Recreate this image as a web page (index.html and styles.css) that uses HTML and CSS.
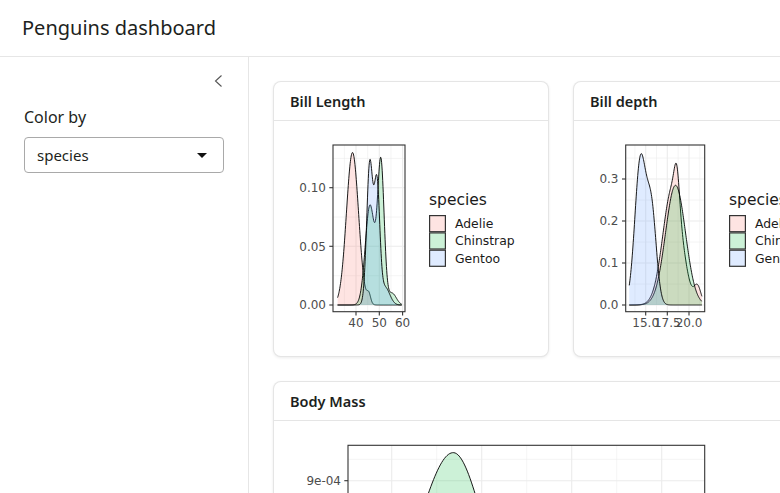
FILE: index.html
```html
<!DOCTYPE html>
<html lang="en">
<head>
<meta charset="utf-8">
<title>Penguins dashboard</title>
<link rel="stylesheet" href="styles.css">
</head>
<body>
<header class="topbar">
  <h1 class="title">Penguins dashboard</h1>
</header>
<div class="layout">
  <aside class="sidebar">
    <div class="collapse-row">
      <svg class="chevron" width="10" height="12" viewBox="0 0 10 12"><path d="M7.5 0.5 L1.5 6 L7.5 11.5"/></svg>
    </div>
    <label class="field-label">Color by</label>
    <div class="select">
      <span>species</span>
      <span class="caret"></span>
    </div>
  </aside>
  <main class="main">
    <div class="cards">
      <section class="card">
        <div class="card-header">Bill Length</div>
        <div class="card-body">
          <svg class="plot" width="244" height="203" viewBox="0 0 244 203">
            <rect class="panel-bg" x="43" y="8" width="72" height="166.7"/>
            <g class="grid-minor">
              <line x1="54.35" y1="8" x2="54.35" y2="174.7"/>
              <line x1="77.65" y1="8" x2="77.65" y2="174.7"/>
              <line x1="100.95" y1="8" x2="100.95" y2="174.7"/>
              <line x1="43" y1="21.4" x2="115" y2="21.4"/>
              <line x1="43" y1="80" x2="115" y2="80"/>
              <line x1="43" y1="138.7" x2="115" y2="138.7"/>
            </g>
            <g class="grid-major">
              <line x1="66" y1="8" x2="66" y2="174.7"/>
              <line x1="89.3" y1="8" x2="89.3" y2="174.7"/>
              <line x1="112.6" y1="8" x2="112.6" y2="174.7"/>
              <line x1="43" y1="50.7" x2="115" y2="50.7"/>
              <line x1="43" y1="109.3" x2="115" y2="109.3"/>
              <line x1="43" y1="168" x2="115" y2="168"/>
            </g>
            <path id="bl-adelie-fill" class="area adelie"/>
            <path id="bl-adelie-line" class="curve"/>
            <path id="bl-chinstrap-fill" class="area chinstrap"/>
            <path id="bl-chinstrap-line" class="curve"/>
            <path id="bl-gentoo-fill" class="area gentoo"/>
            <path id="bl-gentoo-line" class="curve"/>
            <rect class="panel-border" x="43" y="8" width="72" height="166.7"/>
            <g class="ticks">
              <line x1="39.3" y1="50.7" x2="43" y2="50.7"/>
              <line x1="39.3" y1="109.3" x2="43" y2="109.3"/>
              <line x1="39.3" y1="168" x2="43" y2="168"/>
              <line x1="66" y1="174.7" x2="66" y2="178.4"/>
              <line x1="89.3" y1="174.7" x2="89.3" y2="178.4"/>
              <line x1="112.6" y1="174.7" x2="112.6" y2="178.4"/>
            </g>
            <g class="axis-text y-text">
              <text x="36" y="55">0.10</text>
              <text x="36" y="113.6">0.05</text>
              <text x="36" y="172.3">0.00</text>
            </g>
            <g class="axis-text x-text">
              <text x="66" y="190">40</text>
              <text x="89.3" y="190">50</text>
              <text x="112.6" y="190">60</text>
            </g>
            <text class="legend-title" x="139" y="68">species</text>
            <rect class="key adelie" x="139.6" y="78.6" width="15.8" height="16.1"/>
            <rect class="key chinstrap" x="139.6" y="95.9" width="15.8" height="16.1"/>
            <rect class="key gentoo" x="139.6" y="113.2" width="15.8" height="16.1"/>
            <text class="legend-text" x="165" y="91">Adelie</text>
            <text class="legend-text" x="165" y="108.4">Chinstrap</text>
            <text class="legend-text" x="165" y="125.7">Gentoo</text>
          </svg>
        </div>
      </section>

      <section class="card">
        <div class="card-header">Bill depth</div>
        <div class="card-body">
          <svg class="plot" width="244" height="203" viewBox="0 0 244 203">
            <rect class="panel-bg" x="35.7" y="8" width="79" height="166.7"/>
            <g class="grid-minor">
              <line x1="44.9" y1="8" x2="44.9" y2="174.7"/>
              <line x1="66.5" y1="8" x2="66.5" y2="174.7"/>
              <line x1="88.1" y1="8" x2="88.1" y2="174.7"/>
              <line x1="109.8" y1="8" x2="109.8" y2="174.7"/>
              <line x1="35.7" y1="21" x2="114.7" y2="21"/>
              <line x1="35.7" y1="63" x2="114.7" y2="63"/>
              <line x1="35.7" y1="105" x2="114.7" y2="105"/>
              <line x1="35.7" y1="147" x2="114.7" y2="147"/>
            </g>
            <g class="grid-major">
              <line x1="55.7" y1="8" x2="55.7" y2="174.7"/>
              <line x1="77.3" y1="8" x2="77.3" y2="174.7"/>
              <line x1="99" y1="8" x2="99" y2="174.7"/>
              <line x1="35.7" y1="42" x2="114.7" y2="42"/>
              <line x1="35.7" y1="84" x2="114.7" y2="84"/>
              <line x1="35.7" y1="126" x2="114.7" y2="126"/>
              <line x1="35.7" y1="168" x2="114.7" y2="168"/>
            </g>
            <path id="bd-adelie-fill" class="area adelie"/>
            <path id="bd-adelie-line" class="curve"/>
            <path id="bd-chinstrap-fill" class="area chinstrap"/>
            <path id="bd-chinstrap-line" class="curve"/>
            <path id="bd-gentoo-fill" class="area gentoo"/>
            <path id="bd-gentoo-line" class="curve"/>
            <rect class="panel-border" x="35.7" y="8" width="79" height="166.7"/>
            <g class="ticks">
              <line x1="32" y1="42" x2="35.7" y2="42"/>
              <line x1="32" y1="84" x2="35.7" y2="84"/>
              <line x1="32" y1="126" x2="35.7" y2="126"/>
              <line x1="32" y1="168" x2="35.7" y2="168"/>
              <line x1="55.7" y1="174.7" x2="55.7" y2="178.4"/>
              <line x1="77.3" y1="174.7" x2="77.3" y2="178.4"/>
              <line x1="99" y1="174.7" x2="99" y2="178.4"/>
            </g>
            <g class="axis-text y-text">
              <text x="28.5" y="46.3">0.3</text>
              <text x="28.5" y="88.3">0.2</text>
              <text x="28.5" y="130.3">0.1</text>
              <text x="28.5" y="172.3">0.0</text>
            </g>
            <g class="axis-text x-text">
              <text x="55.7" y="190">15.0</text>
              <text x="77.3" y="190">17.5</text>
              <text x="99" y="190">20.0</text>
            </g>
            <text class="legend-title" x="139" y="68">species</text>
            <rect class="key adelie" x="139.6" y="78.6" width="15.8" height="16.1"/>
            <rect class="key chinstrap" x="139.6" y="95.9" width="15.8" height="16.1"/>
            <rect class="key gentoo" x="139.6" y="113.2" width="15.8" height="16.1"/>
            <text class="legend-text" x="165" y="91">Adelie</text>
            <text class="legend-text" x="165" y="108.4">Chinstrap</text>
            <text class="legend-text" x="165" y="125.7">Gentoo</text>
          </svg>
        </div>
      </section>

      <section class="card card-wide">
        <div class="card-header">Body Mass</div>
        <div class="card-body">
          <svg class="plot" width="542" height="203" viewBox="0 0 542 203">
            <rect class="panel-bg" x="58" y="8.3" width="356.7" height="171.7"/>
            <g class="grid-minor">
              <line x1="146.7" y1="8.3" x2="146.7" y2="180"/>
              <line x1="236.7" y1="8.3" x2="236.7" y2="180"/>
              <line x1="326.7" y1="8.3" x2="326.7" y2="180"/>
              <line x1="58" y1="22.3" x2="414.7" y2="22.3"/>
              <line x1="58" y1="65" x2="414.7" y2="65"/>
              <line x1="58" y1="107.8" x2="414.7" y2="107.8"/>
              <line x1="58" y1="150.6" x2="414.7" y2="150.6"/>
            </g>
            <g class="grid-major">
              <line x1="101.7" y1="8.3" x2="101.7" y2="180"/>
              <line x1="191.7" y1="8.3" x2="191.7" y2="180"/>
              <line x1="281.7" y1="8.3" x2="281.7" y2="180"/>
              <line x1="371.7" y1="8.3" x2="371.7" y2="180"/>
              <line x1="58" y1="43.7" x2="414.7" y2="43.7"/>
              <line x1="58" y1="86.4" x2="414.7" y2="86.4"/>
              <line x1="58" y1="129.2" x2="414.7" y2="129.2"/>
              <line x1="58" y1="172" x2="414.7" y2="172"/>
            </g>
            <path id="bm-adelie-fill" class="area adelie"/>
            <path id="bm-adelie-line" class="curve"/>
            <path id="bm-chinstrap-fill" class="area chinstrap"/>
            <path id="bm-chinstrap-line" class="curve"/>
            <path id="bm-gentoo-fill" class="area gentoo"/>
            <path id="bm-gentoo-line" class="curve"/>
            <rect class="panel-border" x="58" y="8.3" width="356.7" height="171.7"/>
            <g class="ticks">
              <line x1="54.3" y1="43.7" x2="58" y2="43.7"/>
              <line x1="54.3" y1="86.4" x2="58" y2="86.4"/>
              <line x1="54.3" y1="129.2" x2="58" y2="129.2"/>
              <line x1="54.3" y1="172" x2="58" y2="172"/>
              <line x1="101.7" y1="180" x2="101.7" y2="183.7"/>
              <line x1="191.7" y1="180" x2="191.7" y2="183.7"/>
              <line x1="281.7" y1="180" x2="281.7" y2="183.7"/>
              <line x1="371.7" y1="180" x2="371.7" y2="183.7"/>
            </g>
            <g class="axis-text y-text">
              <text x="51" y="48">9e-04</text>
              <text x="51" y="90.7">6e-04</text>
              <text x="51" y="133.5">3e-04</text>
              <text x="51" y="176.3">0e+00</text>
            </g>
            <g class="axis-text x-text">
              <text x="101.7" y="196">3000</text>
              <text x="191.7" y="196">4000</text>
              <text x="281.7" y="196">5000</text>
              <text x="371.7" y="196">6000</text>
            </g>
            <text class="legend-title" x="430" y="72">species</text>
            <rect class="key adelie" x="430.6" y="82.6" width="15.8" height="16.1"/>
            <rect class="key chinstrap" x="430.6" y="99.9" width="15.8" height="16.1"/>
            <rect class="key gentoo" x="430.6" y="117.2" width="15.8" height="16.1"/>
            <text class="legend-text" x="456" y="95">Adelie</text>
            <text class="legend-text" x="456" y="112.4">Chinstrap</text>
            <text class="legend-text" x="456" y="129.7">Gentoo</text>
          </svg>
        </div>
      </section>
    </div>
  </main>
</div>
<script src="script.js"></script>
</body>
</html>
```

FILE: styles.css
```css
* { box-sizing: border-box; }

html, body {
  margin: 0;
  padding: 0;
  width: 100%;
  height: 100%;
  overflow: hidden;
  background: #ffffff;
  font-family: "Noto Sans", "Open Sans", sans-serif;
  color: #1d1f21;
}

.topbar {
  height: 57px;
  border-bottom: 1px solid #e6e6e6;
  display: flex;
  align-items: center;
  padding: 0 22px;
}

.title {
  margin: 0;
  font-size: 20px;
  font-weight: 400;
  line-height: 28px;
  color: #1d1f21;
}

.layout {
  display: flex;
  height: calc(100% - 57px);
}

.sidebar {
  flex: 0 0 249px;
  border-right: 1px solid #e6e6e6;
  padding: 16px 24px;
  display: flex;
  flex-direction: column;
}

.collapse-row {
  height: 16px;
  display: flex;
  justify-content: flex-end;
  align-items: center;
  margin-bottom: 16px;
}

.chevron path {
  fill: none;
  stroke: #555;
  stroke-width: 1.1;
}

.field-label {
  font-size: 16px;
  line-height: 24px;
  margin-bottom: 8px;
}

.select {
  height: 36px;
  border: 1px solid #a9a9a9;
  border-radius: 4px;
  display: flex;
  align-items: center;
  justify-content: space-between;
  padding: 0 16px 0 12px;
  font-size: 15px;
  color: #1d1f21;
}

.caret {
  width: 0;
  height: 0;
  border-left: 5.5px solid transparent;
  border-right: 5.5px solid transparent;
  border-top: 5.5px solid #111;
}

.main {
  flex: 1;
  min-width: 0;
  overflow: hidden;
  padding: 24px;
}

.cards {
  display: grid;
  grid-template-columns: 276px 276px;
  gap: 24px;
}

.card {
  border: 1px solid rgba(0, 0, 0, 0.1);
  border-radius: 8px;
  background: #fff;
  box-shadow: 0 1px 3px rgba(0, 0, 0, 0.08);
}

.card-wide {
  grid-column: 1 / span 2;
}

.card-header {
  padding: 8px 16px;
  line-height: 22px;
  font-size: 14.5px;
  font-weight: 600;
  border-bottom: 1px solid rgba(0, 0, 0, 0.1);
  color: #1d1f21;
}

.card-body {
  padding: 16px;
}

.plot {
  display: block;
  font-family: "DejaVu Sans", sans-serif;
}

.panel-bg { fill: #ffffff; }

.grid-minor line {
  stroke: #ebebeb;
  stroke-width: 0.55;
}

.grid-major line {
  stroke: #ebebeb;
  stroke-width: 1.1;
}

.panel-border {
  fill: none;
  stroke: #333333;
  stroke-width: 1.1;
}

.ticks line {
  stroke: #333333;
  stroke-width: 1.1;
}

.axis-text text {
  font-size: 12px;
  fill: #4d4d4d;
}

.y-text text { text-anchor: end; }
.x-text text { text-anchor: middle; }

.legend-title {
  font-size: 15.5px;
  fill: #1a1a1a;
}

.legend-text {
  font-size: 12.4px;
  fill: #1a1a1a;
}

.area { stroke: none; }

.curve {
  fill: none;
  stroke: #000;
  stroke-width: 0.9;
}

.adelie { fill: rgba(248, 118, 109, 0.2); }
.chinstrap { fill: rgba(0, 186, 56, 0.2); }
.gentoo { fill: rgba(97, 156, 255, 0.2); }

.key {
  stroke: #333333;
  stroke-width: 1.2;
}
```

FILE: script.js
```js
// Density curves approximated as sums of gaussian bumps: [height, mean, sd, sdRight?]
function bump(v, c) {
  var sd = (c.length > 3 && v > c[1]) ? c[3] : c[2];
  var z = (v - c[1]) / sd;
  return c[0] * Math.exp(-0.5 * z * z);
}

var PLOTS = [
  { id: 'bl', xv: 40, x0: 66, xs: 2.33, y0: 168, ys: 1173, lo: 32.1, hi: 59.6,
    series: {
      adelie: [[0.13, 38.5, 2.6], [0.008, 45.5, 0.8]],
      chinstrap: [[0.085, 46.0, 2.0], [0.12, 50.7, 1.4], [0.01, 55.5, 1.8]],
      gentoo: [[0.12, 45.9, 1.3], [0.10, 49.0, 1.2], [0.015, 52.5, 2.0]]
    } },
  { id: 'bd', xv: 15, x0: 55.7, xs: 8.65, y0: 168, ys: 420, lo: 13.1, hi: 21.5,
    series: {
      adelie: [[0.28, 18.1, 1.1], [0.08, 18.6, 0.3], [0.04, 21.0, 0.4]],
      chinstrap: [[0.285, 18.45, 1.15]],
      gentoo: [[0.345, 14.4, 0.65], [0.21, 15.7, 0.55]]
    } },
  { id: 'bm', xv: 3000, x0: 101.7, xs: 0.09, y0: 172, ys: 142667, lo: 2700, hi: 6300,
    series: {
      adelie: [[7.6e-4, 3700, 480]],
      chinstrap: [[1.096e-3, 3684, 356, 311]],
      gentoo: [[7.5e-4, 5050, 500]]
    } }
];

PLOTS.forEach(function (p) {
  var X = function (v) { return p.x0 + (v - p.xv) * p.xs; };
  var Y = function (d) { return p.y0 - d * p.ys; };
  Object.keys(p.series).forEach(function (name) {
    var comps = p.series[name];
    var pts = [];
    var n = 240;
    for (var i = 0; i <= n; i++) {
      var v = p.lo + (p.hi - p.lo) * i / n;
      var d = 0;
      comps.forEach(function (c) { d += bump(v, c); });
      pts.push(X(v).toFixed(2) + ',' + Y(d).toFixed(2));
    }
    var line = 'M' + pts.join(' L');
    var fill = line + ' L' + X(p.hi).toFixed(2) + ',' + p.y0 + ' L' + X(p.lo).toFixed(2) + ',' + p.y0 + ' Z';
    document.getElementById(p.id + '-' + name + '-line').setAttribute('d', line);
    document.getElementById(p.id + '-' + name + '-fill').setAttribute('d', fill);
  });
});
```
